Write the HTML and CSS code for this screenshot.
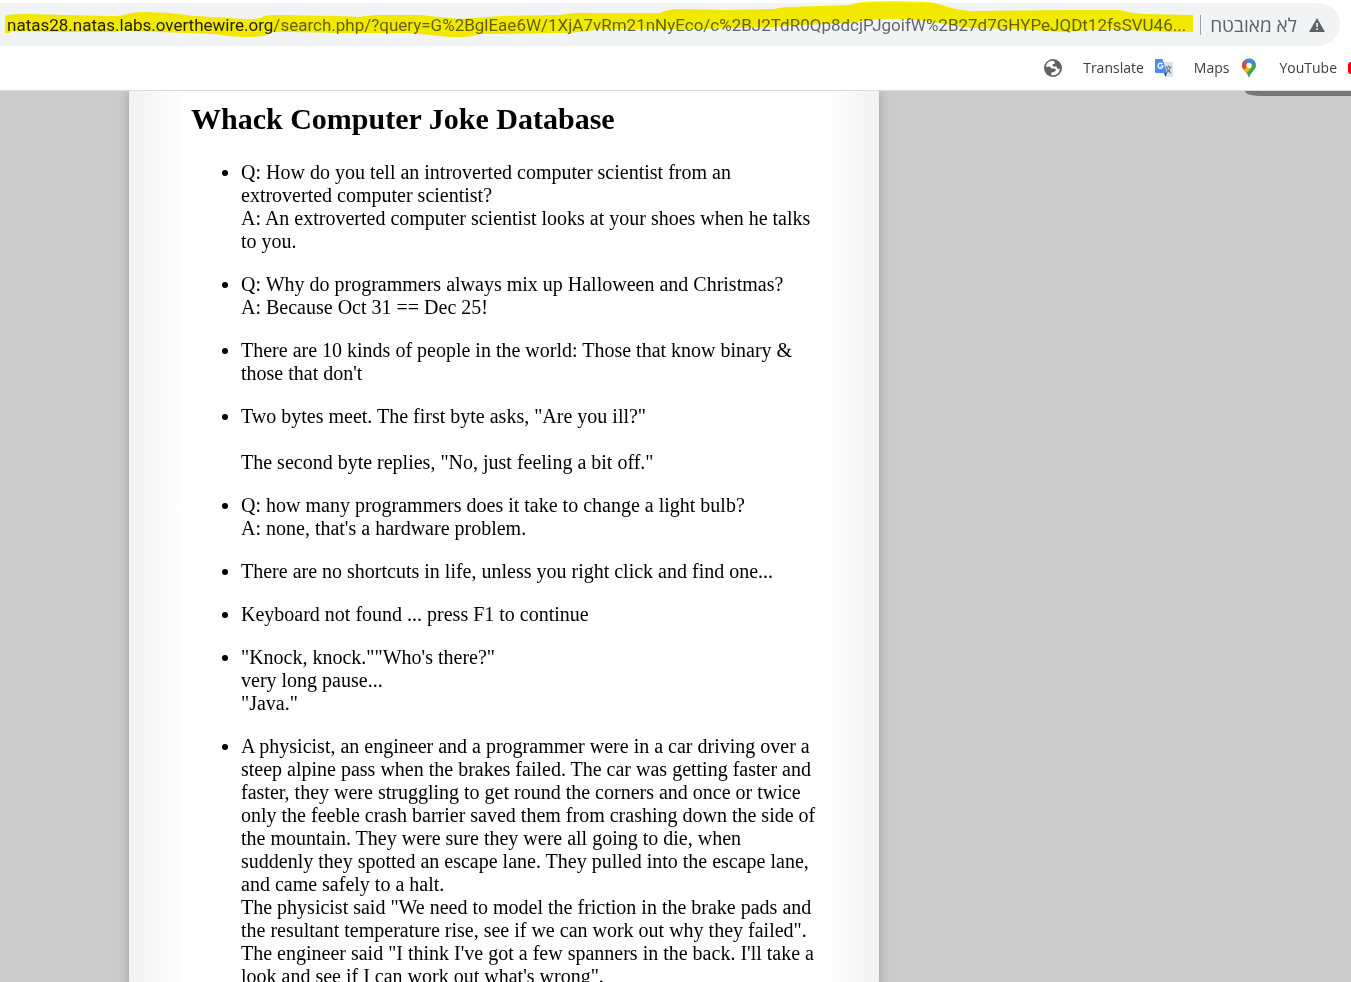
FILE: index.html
```html
<!DOCTYPE html>
<html lang="en">
<head>
<meta charset="utf-8">
<title>Whack Computer Joke Database</title>
<link rel="stylesheet" href="styles.css">
</head>
<body>
<header class="browser">
  <div class="address-bar">
    <input class="url" type="text" aria-label="Address" spellcheck="false" value="natas28.natas.labs.overthewire.org/search.php/?query=G%2BglEae6W/1XjA7vRm21nNyEco/c%2BJ2TdR0Qp8dcjPJgoifW%2B27d7GHYPeJQDt12fsSVU46...">
    <button class="security" type="button" dir="rtl" lang="he">
      <svg width="16" height="14" viewBox="0 0 16 14" aria-hidden="true"><path d="M8 0 16 14H0Z" fill="#5f6368"/><path d="M7.2 5h1.7v4H7.2ZM7.2 10.2h1.7v1.7H7.2Z" fill="#f1f3f4"/></svg>
      <span>לא מאובטח</span>
    </button>
    <svg class="marker" width="1200" height="40" viewBox="0 0 1200 40" aria-hidden="true"><path fill="#fff500" d="M5 16Q8 14 25 14L110 16Q123 16 127 14Q133 12 145 12L170 13 195 16 245 19Q257 20 262 17 266 15 275 15L340 16 358 17 375 15 420 15 460 19 500 16 560 15Q575 12 590 13H660Q668 9 680 9L725 10 775 9Q780 7 790 7L850 5Q860 1 890 1Q925 1 935 3L955 9 970 11 1075 10H1120Q1135 14 1145 14L1193 15V32L1170 32 1150 31 1110 29Q1080 31 1060 32L1035 30 1020 29 970 28 925 21Q900 17 870 20L850 23 800 25 770 27 700 29H600Q580 33 560 33L480 34Q468 38 450 37L410 33 340 33 290 32Q272 31 268 34 264 37 250 37 230 37 215 34L130 31Q120 30 115 32H60L12 31 10 33H5Z"/></svg>
  </div>
  <nav class="bookmarks" aria-label="Bookmarks">
    <a href="#" aria-label="Website"><svg width="20" height="20" viewBox="0 0 20 20" aria-hidden="true"><circle cx="10" cy="10" r="9" fill="#5f6368"/><path d="M11 3Q6 2 3.500 6.500L3 9 7 8.500 8.500 10.500 12 10.500 13 12.500 11 14 8.500 14.500 8 17Q13 18 16 14L17 10.500 14.500 11 13.500 8.500 10 8.500 9.500 6.500 12 5.500Z" fill="#fff"/></svg></a>
    <a href="#"><span>Translate</span><svg width="20" height="20" viewBox="0 0 20 20" aria-hidden="true"><path d="M8 4H18Q19 4 19 5V18Q19 19 18 19H12Z" fill="#dfe1e5"/><path d="M2 1H8.500L13 15H2Q1 15 1 14V2Q1 1 2 1Z" fill="#4b8bf5"/><path d="M10 15H13L11.500 19Z" fill="#2547a8"/><path d="M8.500 6.200A2.500 2.500 0 1 0 9 8.200H6.700" fill="none" stroke="#fff" stroke-width="1.300"/><path d="M11.500 9H17.500M14.500 7.500V9M12.500 9.500Q13.500 13 17 15M16.500 9.500Q15.500 13 12 15" fill="none" stroke="#607d8b" stroke-width="1.100"/></svg></a>
    <a href="#"><span>Maps</span><svg width="20" height="20" viewBox="0 0 20 20" aria-hidden="true"><defs><clipPath id="pin"><path d="M10 .5A7 7 0 0 1 17 7.500C17 12 12 13 10 20C8 13 3 12 3 7.500A7 7 0 0 1 10 .5Z"/></clipPath></defs><g clip-path="url(#pin)"><path d="M0 0H20V20H0Z" fill="#34a853"/><path d="M5 2 12 0H20L14.500 6 10 7.500Z" fill="#4285f4"/><path d="M2 12 8 6 13 9 6 17Z" fill="#fbbc04"/><path d="M2 4 5 2 10 7.500 3.500 13 0 12Z" fill="#ea4335"/></g><circle cx="10" cy="7.500" r="2.700" fill="#fff"/></svg></a>
    <a href="#"><span>YouTube</span><svg width="4" height="20" viewBox="0 0 4 20" aria-hidden="true"><path d="M4 4Q1 4 1 7V13Q1 16 4 16Z" fill="#f00"/></svg></a>
  </nav>
</header>
<main class="viewport">
  <div class="corner-tab"></div>
  <article class="sheet">
    <h1>Whack Computer Joke Database</h1>
    <ul>
      <li>Q: How do you tell an introverted computer scientist from an extroverted computer scientist?<br>A: An extroverted computer scientist looks at your shoes when he talks to you.</li>
      <li>Q: Why do programmers always mix up Halloween and Christmas?<br>A: Because Oct 31 == Dec 25!</li>
      <li>There are 10 kinds of people in the world: Those that know binary &amp; those that don't</li>
      <li>Two bytes meet. The first byte asks, "Are you ill?"<br><br>The second byte replies, "No, just feeling a bit off."</li>
      <li>Q: how many programmers does it take to change a light bulb?<br>A: none, that's a hardware problem.</li>
      <li>There are no shortcuts in life, unless you right click and find one...</li>
      <li>Keyboard not found ... press F1 to continue</li>
      <li>"Knock, knock.""Who's there?"<br>very long pause...<br>"Java."</li>
      <li>A physicist, an engineer and a programmer were in a car driving over a steep alpine pass when the brakes failed. The car was getting faster and faster, they were struggling to get round the corners and once or twice only the feeble crash barrier saved them from crashing down the side of the mountain. They were sure they were all going to die, when suddenly they spotted an escape lane. They pulled into the escape lane, and came safely to a halt.<br>The physicist said "We need to model the friction in the brake pads and the resultant temperature rise, see if we can work out why they failed".<br>The engineer said "I think I've got a few spanners in the back. I'll take a look and see if I can work out what's wrong".</li>
    </ul>
  </article>
</main>
</body>
</html>
```
FILE: styles.css
```css
* { box-sizing: border-box; }

body {
  margin: 0;
  height: 100vh;
  display: flex;
  flex-direction: column;
  overflow: hidden;
  background: #fff;
  font-family: "Liberation Serif", "Times New Roman", serif;
}

.browser {
  flex: none;
  border-bottom: 1px solid #dadce0;
  font-family: "Open Sans", "Noto Sans", sans-serif;
}

.address-bar {
  position: relative;
  display: flex;
  align-items: center;
  height: 43px;
  margin: 3px 11px 0 0;
  padding: 0 15px 0 7px;
  border-radius: 0 22px 22px 0;
  background: #f1f3f4;
}

.url {
  flex: 1;
  min-width: 0;
  padding: 0;
  border: 0;
  outline: 0;
  font: 17px/24px Roboto, "Noto Sans", sans-serif;
  color: #5f6368;
  background: linear-gradient(90deg, #202124 266px, #5f6368 266px);
  background-clip: text;
  -webkit-background-clip: text;
  -webkit-text-fill-color: transparent;
}

.security {
  display: flex;
  align-items: center;
  gap: 12px;
  height: 20px;
  padding: 0 0 0 9px;
  border: 0;
  border-left: 1px solid #9aa0a6;
  background: none;
  color: #5f6368;
  font: 19px/20px "Open Sans", "DejaVu Sans", sans-serif;
  white-space: nowrap;
}

.marker {
  position: absolute;
  left: 0;
  top: -3px;
  mix-blend-mode: multiply;
  pointer-events: none;
}

.bookmarks {
  display: flex;
  justify-content: flex-end;
  align-items: center;
  gap: 20px;
  height: 44px;
}

.bookmarks a {
  display: flex;
  align-items: center;
  gap: 10px;
  color: #3c4043;
  font-size: 14px;
  line-height: 20px;
  text-decoration: none;
}

.viewport {
  position: relative;
  flex: 1;
  min-height: 0;
  overflow: hidden;
  padding-left: 129px;
  background: #ccc;
}

.corner-tab {
  position: absolute;
  top: 0;
  right: 0;
  width: 106px;
  height: 5px;
  border-bottom-left-radius: 14px 5px;
  background: #777;
}

.sheet {
  max-width: 750px;
  min-height: 100%;
  padding: 10px 62px 0;
  background: linear-gradient(90deg, #f1f1f1, #f8f8f8 25px, #fdfdfd 48px, #fff 68px, #fff calc(100% - 68px), #fdfdfd calc(100% - 48px), #f8f8f8 calc(100% - 25px), #f1f1f1);
  box-shadow: 0 0 10px rgba(0, 0, 0, 0.25);
  color: #000;
  font-size: 20px;
  line-height: 23px;
}

.sheet h1 {
  margin: 0 0 25px;
  font-size: 30px;
  line-height: 35px;
}

.sheet ul {
  margin: 0;
  padding-left: 50px;
}

.sheet li { margin-bottom: 20px; }
```
